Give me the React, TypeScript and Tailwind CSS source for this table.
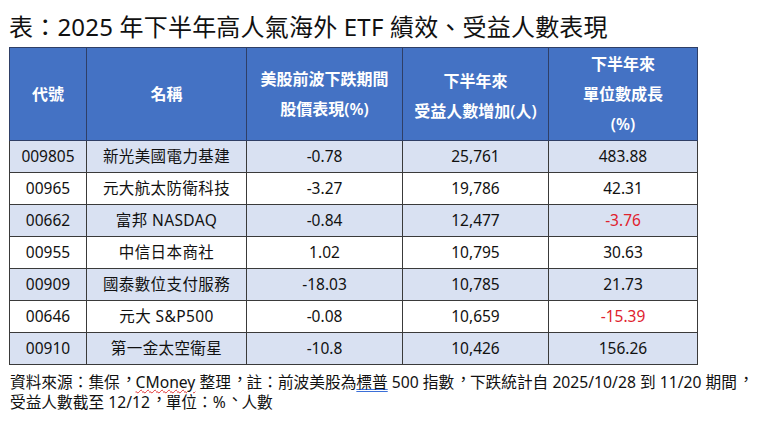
import React from "react";

interface Row {
  code: string;
  name: string;
  drop: string;
  holders: string;
  growth: string;
}

const rows: Row[] = [
  { code: "009805", name: "新光美國電力基建", drop: "-0.78", holders: "25,761", growth: "483.88" },
  { code: "00965", name: "元大航太防衛科技", drop: "-3.27", holders: "19,786", growth: "42.31" },
  { code: "00662", name: "富邦 NASDAQ", drop: "-0.84", holders: "12,477", growth: "-3.76" },
  { code: "00955", name: "中信日本商社", drop: "1.02", holders: "10,795", growth: "30.63" },
  { code: "00909", name: "國泰數位支付服務", drop: "-18.03", holders: "10,785", growth: "21.73" },
  { code: "00646", name: "元大 S&P500", drop: "-0.08", holders: "10,659", growth: "-15.39" },
  { code: "00910", name: "第一金太空衛星", drop: "-10.8", holders: "10,426", growth: "156.26" },
];

const font = { fontFamily: '"Noto Sans", "Noto Sans CJK TC", sans-serif' };

// full-width punctuation centred in its cell, as Traditional Chinese fonts draw it
const P = ({ c }: { c: string }) => (
  <span className="inline-block w-[1em] text-center">
    <span className="inline-block -translate-y-[0.18em] translate-x-[0.08em]">{c}</span>
  </span>
);

const App = (): React.JSX.Element => {
  return (
    <div lang="zh-Hant-TW" className="w-[760px] h-[424px] bg-white text-[#111] overflow-hidden" style={font}>
      <h1 className="pl-[9px] pt-[11px] h-[47px] text-[24px] leading-[32px] font-normal tracking-[0.2px]">
        表：2025 年下半年高人氣海外 ETF 績效、受益人數表現
      </h1>
      <table className="ml-[9px] border-collapse table-fixed w-[688px] text-center">
        <colgroup>
          <col className="w-[77px]" />
          <col className="w-[160px]" />
          <col className="w-[156px]" />
          <col className="w-[146px]" />
          <col className="w-[149px]" />
        </colgroup>
        <thead>
          <tr className="h-[93px] bg-[#4472c4] text-white text-[16px] leading-[30px]">
            <th className="border border-[#2f3f66] font-semibold">代號</th>
            <th className="border border-[#2f3f66] font-semibold">名稱</th>
            <th className="border border-[#2f3f66] font-semibold">
              美股前波下跌期間
              <br />
              股價表現(%)
            </th>
            <th className="border border-[#2f3f66] font-semibold pt-[4px]">
              下半年來
              <br />
              受益人數增加(人)
            </th>
            <th className="border border-[#2f3f66] font-semibold">
              下半年來
              <br />
              單位數成長
              <br />
              (%)
            </th>
          </tr>
        </thead>
        <tbody className="text-[15.5px]">
          {rows.map((r, i) => (
            <tr key={r.code} className={i % 2 === 0 ? "h-[32px] bg-[#d9e1f2]" : "h-[32px] bg-white"}>
              <td className="border border-[#3a3a3a] p-0">{r.code}</td>
              <td className="border border-[#3a3a3a] p-0 tracking-[0.4px]">{r.name}</td>
              <td className="border border-[#3a3a3a] p-0">{r.drop}</td>
              <td className="border border-[#3a3a3a] p-0">{r.holders}</td>
              <td
                className={
                  r.growth.startsWith("-")
                    ? "border border-[#3a3a3a] p-0 text-[#e0222e]"
                    : "border border-[#3a3a3a] p-0"
                }
              >
                {r.growth}
              </td>
            </tr>
          ))}
        </tbody>
      </table>
      <div className="pl-[10px] pt-[7px] text-[15.7px] leading-[20px] whitespace-nowrap">
        <p>
          資料來源：集保<P c="，" />
          <span className="underline decoration-wavy decoration-[#e03030] decoration-1 underline-offset-1">
            CMoney
          </span>{" "}
          整理<P c="，" />註：前波美股為
          <span className="underline decoration-double decoration-[#3b6fd8] decoration-1 underline-offset-1">
            標普
          </span>{" "}
          500 指數<P c="，" />下跌統計自 2025/10/28 到 11/20 期間<P c="，" />
        </p>
        <p>
          受益人數截至 12/12<P c="，" />單位：%<P c="、" />人數
        </p>
      </div>
    </div>
  );
};

export default App;
